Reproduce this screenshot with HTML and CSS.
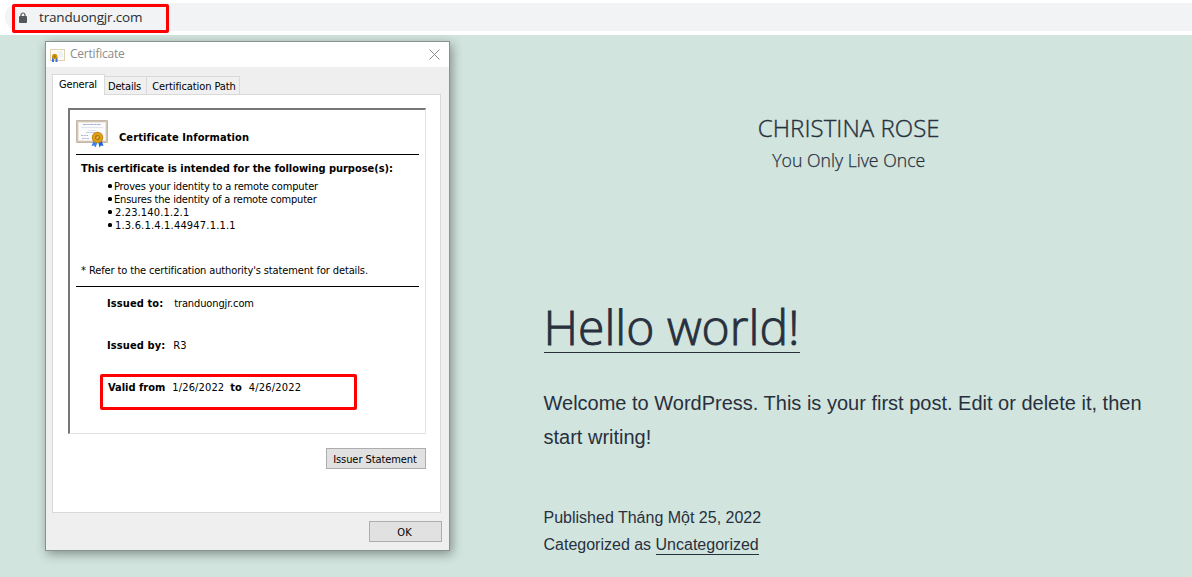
FILE: index.html
```html
<!DOCTYPE html>
<html lang="en">
<head>
<meta charset="utf-8">
<title>Christina Rose</title>
<link rel="stylesheet" href="styles.css">
</head>
<body>
<header class="toolbar">
  <div class="omnibox">
    <svg class="lock" width="8" height="11" viewBox="0 0 8 11"><path d="M2 5V3a2 2 0 0 1 4 0v2" fill="none" stroke="#54585d" stroke-width="1.2"/><rect y="4" width="8" height="7" rx="1" fill="#54585d"/></svg>
    <span class="url">tranduongjr.com</span>
  </div>
</header>
<div class="mark mark-url"></div>
<main class="page">
  <div class="branding">
    <div class="site-title"><span>CHRISTINA ROSE</span></div>
    <div class="tagline"><span>You Only Live Once</span></div>
  </div>
  <article class="post">
    <h1><a class="post-title">Hello world!</a></h1>
    <p class="body"><span>Welcome to WordPress. This is your first post. Edit or delete it, then</span><br><span>start writing!</span></p>
    <div class="meta"><span>Published Tháng Một 25, 2022</span><br><span>Categorized as <a>Uncategorized</a></span></div>
  </article>
</main>

<section class="dialog">
  <div class="titlebar">
    <svg class="cert-small" width="15" height="13" viewBox="0 0 15 13"><rect x=".5" y=".5" width="14" height="11" fill="#fbfaf7" stroke="#e2d2b4"/><path d="M7 3h5M9 5h4M8 7h5" stroke="#e6e8ee"/><path d="M3 8v5M6.500 8v5" stroke="#3a72d8" stroke-width="2"/><circle cx="4.700" cy="7.500" r="2.700" fill="#d1940c"/><circle cx="4.700" cy="7.500" r="1" fill="#a66c08"/></svg>
    <span class="caption">Certificate</span>
    <svg class="close" width="11" height="11" viewBox="0 0 11 11"><path d="M.5.5l10 10M10.500.5l-10 10" stroke="#8b8b8b" stroke-width="1"/></svg>
  </div>
  <nav class="tabs">
    <span class="tab active"><b class="t-gen">General</b></span>
    <span class="tab tab-det"><b class="t-det">Details</b></span>
    <span class="tab tab-path"><b class="t-path">Certification Path</b></span>
  </nav>
  <div class="panel">
    <div class="sheet">
      <div class="head">
        <svg width="32" height="28" viewBox="0 0 32 28"><rect width="32" height="23" rx="1" fill="#cfc5b6"/><rect x=".5" y=".5" width="31" height="22" rx="1" fill="none" stroke="#b9ab98" stroke-dasharray="1 1"/><rect x="2" y="2" width="28" height="19" fill="#eee8df"/><rect x="3" y="3" width="26" height="17" fill="#fbfbfd"/><path d="M7 4.500h18" stroke="#a9b1d8" stroke-dasharray="3 .5"/><path d="M5 7.500h22M12 10.500h8" stroke="#e1e4ef"/><path d="M10 12.500h10" stroke="#c7cce3"/><path d="M5 15.500h7M6 18.500h7" stroke="#b4b9d0" stroke-dasharray="2 .6"/><path d="M17.500 21l-2 5 2.500-.5 1.500 2 2-5z" fill="#3f83ee"/><path d="M22 21.500l1.500 6 1.500-2 2.500.5-2-6z" fill="#2364d4"/><circle cx="21.500" cy="17.500" r="5.700" fill="#c9890c"/><circle cx="21.500" cy="17.500" r="4.500" fill="#dfa61e"/><circle cx="21.500" cy="17.500" r="2.700" fill="#b87a0d"/><path d="M20.500 18.500l2-2" stroke="#f4d25c" stroke-width="1.200"/></svg>
        <strong class="s-info">Certificate Information</strong>
      </div>
      <div class="purpose"><strong class="s-purp">This certificate is intended for the following purpose(s):</strong></div>
      <ul class="list">
        <li><span class="i1">Proves your identity to a remote computer</span></li>
        <li><span class="i2">Ensures the identity of a remote computer</span></li>
        <li><span class="i3">2.23.140.1.2.1</span></li>
        <li><span class="i4">1.3.6.1.4.1.44947.1.1.1</span></li>
      </ul>
      <div class="note"><i>*</i><span class="s-note">Refer to the certification authority's statement for details.</span></div>
      <div class="facts">
        <div class="row"><strong class="f1">Issued to:</strong><span class="v1">tranduongjr.com</span></div>
        <div class="row"><strong class="f2">Issued by:</strong><span class="v2">R3</span></div>
        <div class="row"><strong class="f3">Valid from</strong><span class="v3">1/26/2022</span><strong class="f4">to</strong><span class="v4">4/26/2022</span></div>
      </div>
    </div>
    <button class="btn issuer"><span>Issuer Statement</span></button>
  </div>
  <button class="btn ok">OK</button>
</section>
<div class="mark mark-valid"></div>
</body>
</html>
```
FILE: styles.css
```css
* { box-sizing: border-box; }
body { margin: 0; width: 1192px; height: 577px; overflow: hidden; background: #fff; display: flex; flex-direction: column; }
.toolbar { height: 35px; padding: 3px 0 4px 5px; }
.omnibox { height: 28px; background: #f1f3f4; border-radius: 14px 0 0 14px; display: flex; align-items: center; padding-left: 14px; }
.lock { margin-right: 12px; }
.url { font: 13.5px/20px "Open Sans", sans-serif; color: #2b2f33; letter-spacing: -.17px; }
.page { flex: 1; background: #d1e4dd; color: #28303d; padding-left: 543.5px; }
.branding { padding-top: 77px; width: 610.5px; display: flex; flex-direction: column; align-items: center; white-space: nowrap; }
.site-title { font: 300 24px/32px "Open Sans", sans-serif; letter-spacing: .05px; -webkit-text-stroke: .35px #28303d; }
.tagline { font: 300 17.7px/32px "Open Sans", sans-serif; -webkit-text-stroke: .25px #28303d; }
.post h1 { margin: 128px 0 0; height: 51px; font: 300 48px/50px "Open Sans", sans-serif; white-space: nowrap; -webkit-text-stroke: .9px #28303d; }
.post-title { display: block; width: 256.5px; height: 49px; border-bottom: 1px solid #28303d; line-height: 46px; letter-spacing: .03px; }
.body { margin: 31px 0 0; font: 20px/34px "Liberation Sans", Arial, sans-serif; white-space: nowrap; }
.meta { margin-top: 50px; font: 16px/27px "Liberation Sans", Arial, sans-serif; white-space: nowrap; }
.meta a { display: inline-block; line-height: 18px; border-bottom: 1px solid #28303d; }
.dialog { position: absolute; left: 45px; top: 41px; width: 405px; height: 510px; background: #efefef; border: 1px solid #87938e; box-shadow: 2px 3px 10px rgba(0,0,0,.38); font: 11px/13px "DejaVu Sans Condensed", "DejaVu Sans", sans-serif; color: #000; white-space: nowrap; display: flex; flex-direction: column; }
.titlebar { height: 25px; background: #fff; display: flex; align-items: center; padding: 0 9.500px 0 4px; }
.cert-small { margin-top: 2px; }
.caption { font: 12px/16px "Open Sans", sans-serif; color: #8c8c8c; margin: -1px 0 0 5px; flex: 1; letter-spacing: -.22px; }
.tabs { height: 28px; padding: 7px 0 0 6px; display: flex; align-items: flex-end; position: relative; z-index: 1; margin-bottom: -1px; }
.tab { height: 18px; margin-bottom: 1px; padding-top: 2px; border: 1px solid #d9d9d9; border-width: 1px 1px 0 0; background: #f0f0f0; display: flex; align-items: center; justify-content: center; }
.tab b { font-weight: 400; }
.tab.active { height: 21px; margin-bottom: 0; padding: 0 1px 2px 0; width: 53px; background: #fff; border-left-width: 1px; }
.t-gen { letter-spacing: -.15px; }
.t-det { letter-spacing: -.2px; }
.tab-det { width: 42px; padding-right: 2px; }
.tab-path { width: 93px; padding-left: 2px; }
.t-path { letter-spacing: -.1px; }
.panel { margin: 0 8px 0 6px; height: 419px; background: #fff; border: 1px solid #d9d9d9; padding: 13px 14px 0 15px; display: flex; flex-direction: column; }
.sheet { height: 326px; border: 1px solid #e3e3e3; border-top: 2px solid #777; border-left: 2px solid #777; }
.head { margin: 0 6px; height: 45px; padding-top: 10px; border-bottom: 1px solid #000; display: flex; gap: 11px; }
.head strong { margin-top: 11px; }
.s-info { letter-spacing: .1px; }
.purpose { padding: 7px 0 0 11px; height: 25px; }
.s-purp { letter-spacing: -.03px; }
.list { margin: 0; padding: 0 0 0 37px; height: 83px; list-style: none; }
.list li { height: 13px; display: flex; align-items: center; }
.list li::before { content: ""; width: 4px; height: 4px; border-radius: 1.5px; background: #000; margin: 0 2px 1px 1px; }
.i1 { letter-spacing: -.17px; }
.i2 { letter-spacing: -.2px; }
.i3 { margin-left: 1px; letter-spacing: .14px; }
.i4 { margin-left: 1px; letter-spacing: .19px; }
.note { height: 24px; margin: 0 6px; padding: 1px 0 0 5px; border-bottom: 1px solid #000; display: flex; }
.note i { font-style: normal; width: 8px; }
.s-note { letter-spacing: -.13px; }
.facts { padding: 10px 0 0 37px; display: flex; flex-direction: column; gap: 29px; }
.row { display: flex; height: 13px; }
.f1, .f2 { letter-spacing: .1px; }
.v1 { margin-left: 11px; letter-spacing: -.13px; }
.v2 { margin-left: 8px; }
.f3 { margin-left: 1px; }
.v3 { margin: 0 6px 0 7px; letter-spacing: .13px; }
.v4 { margin-left: 7px; letter-spacing: .2px; }
.btn { font: inherit; color: #000; padding: 1px 0 0; background: #e1e1e1; border: 1px solid #adadad; height: 21px; }
.issuer { width: 100px; align-self: flex-end; margin-top: 14px; padding-right: 2px; letter-spacing: -.08px; }
.ok { width: 73px; align-self: flex-end; margin: 8px 7px 0 0; padding-right: 2px; }
.mark { position: absolute; border: 3px solid #f00; border-radius: 2px; }
.mark-url { left: 12px; top: 4px; width: 157px; height: 29px; }
.mark-valid { left: 100px; top: 374px; width: 257px; height: 36px; }
```
